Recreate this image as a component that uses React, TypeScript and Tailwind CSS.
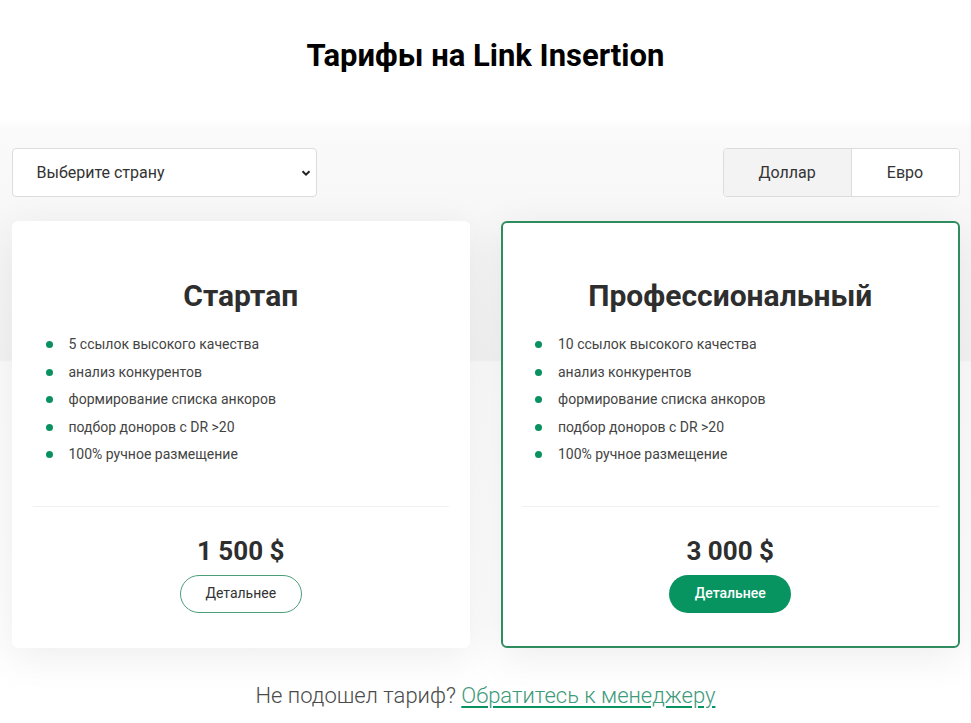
import React from "react";

const features = (n: string) => [
  `${n} ссылок высокого качества`,
  "анализ конкурентов",
  "формирование списка анкоров",
  "подбор доноров с DR >20",
  "100% ручное размещение",
];

function Card({
  title,
  n,
  price,
  active,
}: {
  title: string;
  n: string;
  price: string;
  active?: boolean;
}) {
  return (
    <div
      className={
        "flex flex-col bg-white rounded-[6px] border-2 pt-[54px] pb-[33px] px-[19px] shadow-[0_8px_40px_rgba(0,0,0,0.07)] " +
        (active ? "border-[#2f8c5f]" : "border-transparent")
      }
    >
      <h2 className="text-center text-[30px] leading-[38px] font-bold text-[#2e2e2e]">{title}</h2>
      <ul className="mt-[16px] pl-[13px] flex flex-col">
        {features(n).map((f) => (
          <li key={f} className="flex items-center gap-[16px] text-[14px] leading-[27.5px] text-[#444]">
            <span className="w-[7px] h-[7px] rounded-full bg-[#0a9160] shrink-0" />
            <span>{f}</span>
          </li>
        ))}
      </ul>
      <div className="mt-[37px] h-px bg-[#f0f0f0]" />
      <div className="mt-[28px] text-center text-[26px] leading-[32px] font-bold text-[#2e2e2e]">{price}</div>
      <div className="mt-[8px] flex justify-center">
        {active ? (
          <button className="w-[122px] h-[38px] rounded-full bg-[#079461] text-white text-[14px] font-medium">
            Детальнее
          </button>
        ) : (
          <button className="w-[122px] h-[38px] rounded-full border border-[#4c9e7b] bg-white text-[#333] text-[14px]">
            Детальнее
          </button>
        )}
      </div>
    </div>
  );
}

export default function App() {
  return (
    <div
      className="min-h-[723px] w-full font-['Roboto',sans-serif] bg-[linear-gradient(to_bottom,#ffffff_0px,#ffffff_118px,#fafafa_130px,#f3f3f3_360px,#fbfbfb_362px,#ffffff_723px)]"
    >
      <div className="w-[948px] mx-auto pt-[38px]">
        <h1 className="text-center text-[31px] leading-[36px] font-bold text-black">Тарифы на Link Insertion</h1>
        <div className="mt-[74px] flex justify-between items-center">
          <div className="w-[305px] h-[49px] bg-white border border-[#dcdcdc] rounded-[4px] flex items-center justify-between pl-[24px] pr-[4px]">
            <span className="text-[16px] text-[#333]">Выберите страну</span>
            <svg width="12" height="12" viewBox="0 0 12 12">
              <path d="M2.5 4.2 L6 7.7 L9.5 4.2" stroke="#222" strokeWidth="2" fill="none" />
            </svg>
          </div>
          <div className="flex h-[49px] border border-[#dcdcdc] rounded-[4px] overflow-hidden bg-white">
            <button className="w-[128px] bg-[#f3f3f3] text-[16px] text-[#333] border-r border-[#dcdcdc]">Доллар</button>
            <button className="w-[107px] bg-white text-[16px] text-[#333]">Евро</button>
          </div>
        </div>
        <div className="mt-[24px] grid grid-cols-2 gap-[31px]">
          <Card title="Стартап" n="5" price="1 500 $" />
          <Card title="Профессиональный" n="10" price="3 000 $" active />
        </div>
        <p className="mt-[31px] text-center text-[22px] font-light text-[#4a4a4a]">
          Не подошел тариф?{" "}
          <a className="text-[#3d9a7a] underline decoration-[#079461] underline-offset-[3px]" href="#">
            Обратитесь к менеджеру
          </a>
        </p>
      </div>
    </div>
  );
}
